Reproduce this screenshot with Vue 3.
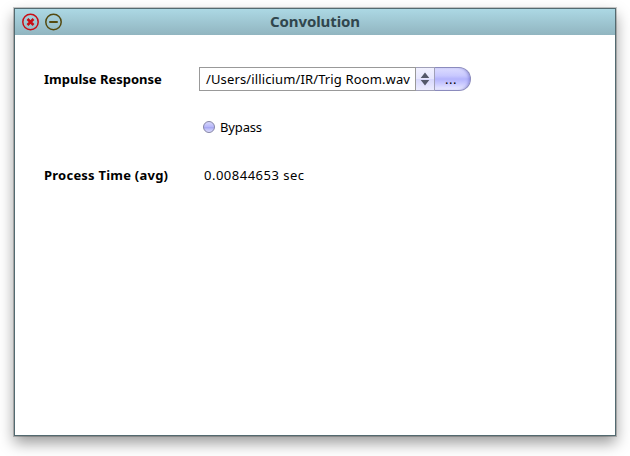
<script setup>
import { ref } from 'vue'

const title = 'Convolution'
const path = ref('/Users/illicium/IR/Trig Room.wav')
const bypass = ref(false)
const processTime = ref('0.00844653')
</script>

<template>
  <main class="desktop">
    <section class="window">
      <header class="titlebar">
        <svg class="control" viewBox="0 0 18 18" aria-label="Close">
          <circle cx="8.5" cy="9" r="7.7" fill="none" stroke="#c90d14" stroke-width="1.5" />
          <path d="M5.5 6L11.5 12M11.5 6L5.5 12" stroke="#c90d14" stroke-width="2.5" />
        </svg>
        <svg class="control" viewBox="0 0 18 18" aria-label="Minimise">
          <circle cx="8.5" cy="9" r="7.7" fill="none" stroke="#54490f" stroke-width="1.5" />
          <path d="M5 9H12" stroke="#54490f" stroke-width="2" stroke-linecap="round" />
        </svg>
        <h1 class="title"><span class="title-text">{{ title }}</span></h1>
      </header>
      <div class="content">
        <div class="row">
          <span class="label">Impulse Response</span>
          <div class="picker">
            <div class="field"><span class="path">{{ path }}</span></div>
            <div class="stepper">
              <svg width="10" height="14" viewBox="0 0 10 14">
                <path d="M5 0.5L9.3 6H0.7ZM0.7 8H9.3L5 13.5Z" fill="#54586a" />
              </svg>
            </div>
            <button class="browse">...</button>
          </div>
        </div>
        <div class="row">
          <span class="label"></span>
          <label class="toggle" @click="bypass = !bypass">
            <span class="lamp"></span><span class="bypass">Bypass</span>
          </label>
        </div>
        <div class="row">
          <span class="label process">Process Time (avg)</span>
          <span class="value">{{ processTime }} sec</span>
        </div>
      </div>
    </section>
  </main>
</template>

<style>
body {
  margin: 0;
  background: #fff;
}
</style>

<style scoped>
.desktop {
  box-sizing: border-box;
  width: 630px;
  height: 456px;
  padding: 8px 14px 20px;
  overflow: hidden;
  font-family: "Noto Sans", "Open Sans", sans-serif;
  font-size: 13px;
  color: #000;
}
.window {
  box-sizing: border-box;
  width: 602px;
  height: 428px;
  border: 1px solid #536a70;
  background: #fff;
  box-shadow: 0 0 0 1px rgba(0, 0, 0, 0.2), 0 7px 14px rgba(0, 0, 0, 0.4);
}
.titlebar {
  display: flex;
  align-items: center;
  gap: 5px;
  box-sizing: border-box;
  height: 26px;
  padding: 0 7px;
  background: linear-gradient(#acd8e4, #91b5c0);
}
.control {
  width: 18px;
  height: 18px;
  flex: none;
}
.title {
  flex: 1;
  margin: 0 46px 0 0;
  font-size: 15px;
  line-height: 24px;
  height: 26px;
  font-weight: 700;
  letter-spacing: -0.1px;
  color: #30464d;
  text-align: center;
}
.content {
  display: flex;
  flex-direction: column;
  gap: 24px;
  padding: 32px 29px;
}
.row {
  display: flex;
  height: 24px;
  align-items: center;
  line-height: 24px;
  white-space: nowrap;
}
.label {
  width: 155px;
  flex: none;
  font-weight: 700;
}
.process {
  letter-spacing: 0.23px;
}
.picker {
  display: flex;
  width: 272px;
  height: 24px;
}
.field {
  box-sizing: border-box;
  width: 217px;
  height: 24px;
  padding-left: 6px;
  border: 1px solid #999;
  line-height: 22px;
  letter-spacing: 0.13px;
}
.stepper {
  display: flex;
  align-items: center;
  justify-content: center;
  box-sizing: border-box;
  width: 19px;
  border: solid #a0a0b8;
  border-width: 1px 1px 1px 0;
  background: linear-gradient(#f1f1ff 0, #e6e6fe 48%, #d8d8fc 52%, #ececff 100%);
}
.browse {
  box-sizing: border-box;
  width: 36px;
  height: 24px;
  padding: 0 3px 0 0;
  border: 1px solid #8b8bbd;
  border-left-width: 0;
  border-radius: 0 12px 12px 0;
  background: linear-gradient(#dcdcff 0, #c8c8fe 35%, #b4b4fc 50%, #c8c8ff 70%, #ececff 100%);
  box-shadow: inset -2px 0 3px -1px rgba(99, 99, 195, 0.6);
  color: #000;
  font: 13px/22px "Noto Sans", sans-serif;
  letter-spacing: 0.5px;
}
.toggle {
  display: flex;
  align-items: center;
  gap: 5px;
  padding-left: 4px;
}
.bypass {
  letter-spacing: -0.15px;
}
.lamp {
  box-sizing: border-box;
  width: 12px;
  height: 12px;
  border: 1px solid #8585a6;
  border-radius: 50%;
  background: linear-gradient(#d6d6fb 0, #babafa 45%, #a9a9f3 55%, #dedeff 100%);
}
.value {
  padding-left: 5px;
  letter-spacing: 0.5px;
}
</style>
